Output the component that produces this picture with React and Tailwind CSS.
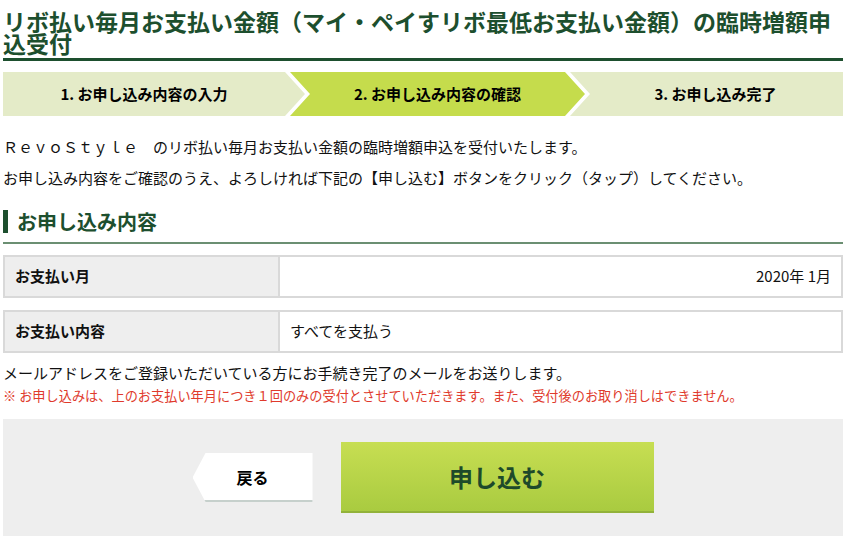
import React from 'react'

const font = { fontFamily: '"Noto Sans CJK JP", "Noto Sans", sans-serif' }

function Steps() {
  return (
    <div className="mt-[11px] flex h-[44px] text-[15px] font-bold text-black">
      <div className="flex w-[302px] shrink-0 items-center justify-center bg-[#e4ebc8] pr-[20px] [clip-path:polygon(0_0,282px_0,302px_50%,282px_100%,0_100%)]">
        1. お申し込み内容の入力
      </div>
      <div className="-ml-[15px] flex w-[295px] shrink-0 items-center justify-center bg-[#c5dc4c] [clip-path:polygon(0_0,275px_0,295px_50%,275px_100%,0_100%,20px_50%)]">
        2. お申し込み内容の確認
      </div>
      <div className="-ml-[15px] flex flex-1 items-center justify-center bg-[#e4ebc8] pl-[18px] [clip-path:polygon(0_0,100%_0,100%_100%,0_100%,20px_50%)]">
        3. お申し込み完了
      </div>
    </div>
  )
}

function Row({ label, value, right }) {
  return (
    <div className="flex h-[43px] border-2 border-[#d9d9d9] text-[15px]">
      <div className="flex w-[275px] shrink-0 items-center border-r-2 border-[#d9d9d9] bg-[#eeeeee] pl-[10px] font-bold">
        {label}
      </div>
      <div className={`flex flex-1 items-center px-[10px] ${right ? 'justify-end' : ''}`}>
        {value}
      </div>
    </div>
  )
}

export default function App() {
  return (
    <div className="h-[540px] w-[846px] overflow-hidden bg-white px-[3px] text-[#111]" style={font}>
      <h1 className="border-b-[3px] border-[#1d4f2e] pt-[10px] pb-[4px] text-[23px] font-bold leading-[22px] text-[#1d4f2e]">
        リボ払い毎月お支払い金額（マイ・ペイすリボ最低お支払い金額）の臨時増額申込受付
      </h1>

      <Steps />

      <div className="mt-[15px] text-[15px] leading-[31px]">
        <p>ＲｅｖｏＳｔｙｌｅ　のリボ払い毎月お支払い金額の臨時増額申込を受付いたします。</p>
        <p>お申し込み内容をご確認のうえ、よろしければ下記の【申し込む】ボタンをクリック（タップ）してください。</p>
      </div>

      <div className="mt-[17px] border-b-2 border-[#6b8f72] pb-[9px]">
        <h2 className="flex h-[23px] items-center border-l-[5px] border-[#1d4f2e] pl-[9px] text-[20px] font-bold text-[#1d4f2e]">
          お申し込み内容
        </h2>
      </div>

      <div className="mt-[11px] flex flex-col gap-[12px]">
        <Row label="お支払い月" value="2020年 1月" right />
        <Row label="お支払い内容" value="すべてを支払う" />
      </div>

      <p className="mt-[9px] text-[15px] leading-[22px]">
        メールアドレスをご登録いただいている方にお手続き完了のメールをお送りします。
      </p>
      <p className="text-[13.2px] leading-[24px] text-[#e03a2c]">
        ※ お申し込みは、上のお支払い年月につき１回のみの受付とさせていただきます。また、受付後のお取り消しはできません。
      </p>

      <div className="mt-[11px] flex h-[117px] items-center justify-center gap-[28px] bg-[#eeeeee]">
        <button className="flex h-[49px] w-[120px] items-center justify-center border-b-2 border-[#c6d0cc] bg-white text-[16px] font-bold text-black [clip-path:polygon(13px_0,100%_0,100%_100%,13px_100%,0_50%)]">
          戻る
        </button>
        <button className="flex h-[71px] w-[313px] items-center justify-center border-b-2 border-[#92b23a] bg-gradient-to-b from-[#c7de52] to-[#a9cb40] text-[24px] font-bold text-[#1d4a2a]">
          申し込む
        </button>
      </div>
    </div>
  )
}
